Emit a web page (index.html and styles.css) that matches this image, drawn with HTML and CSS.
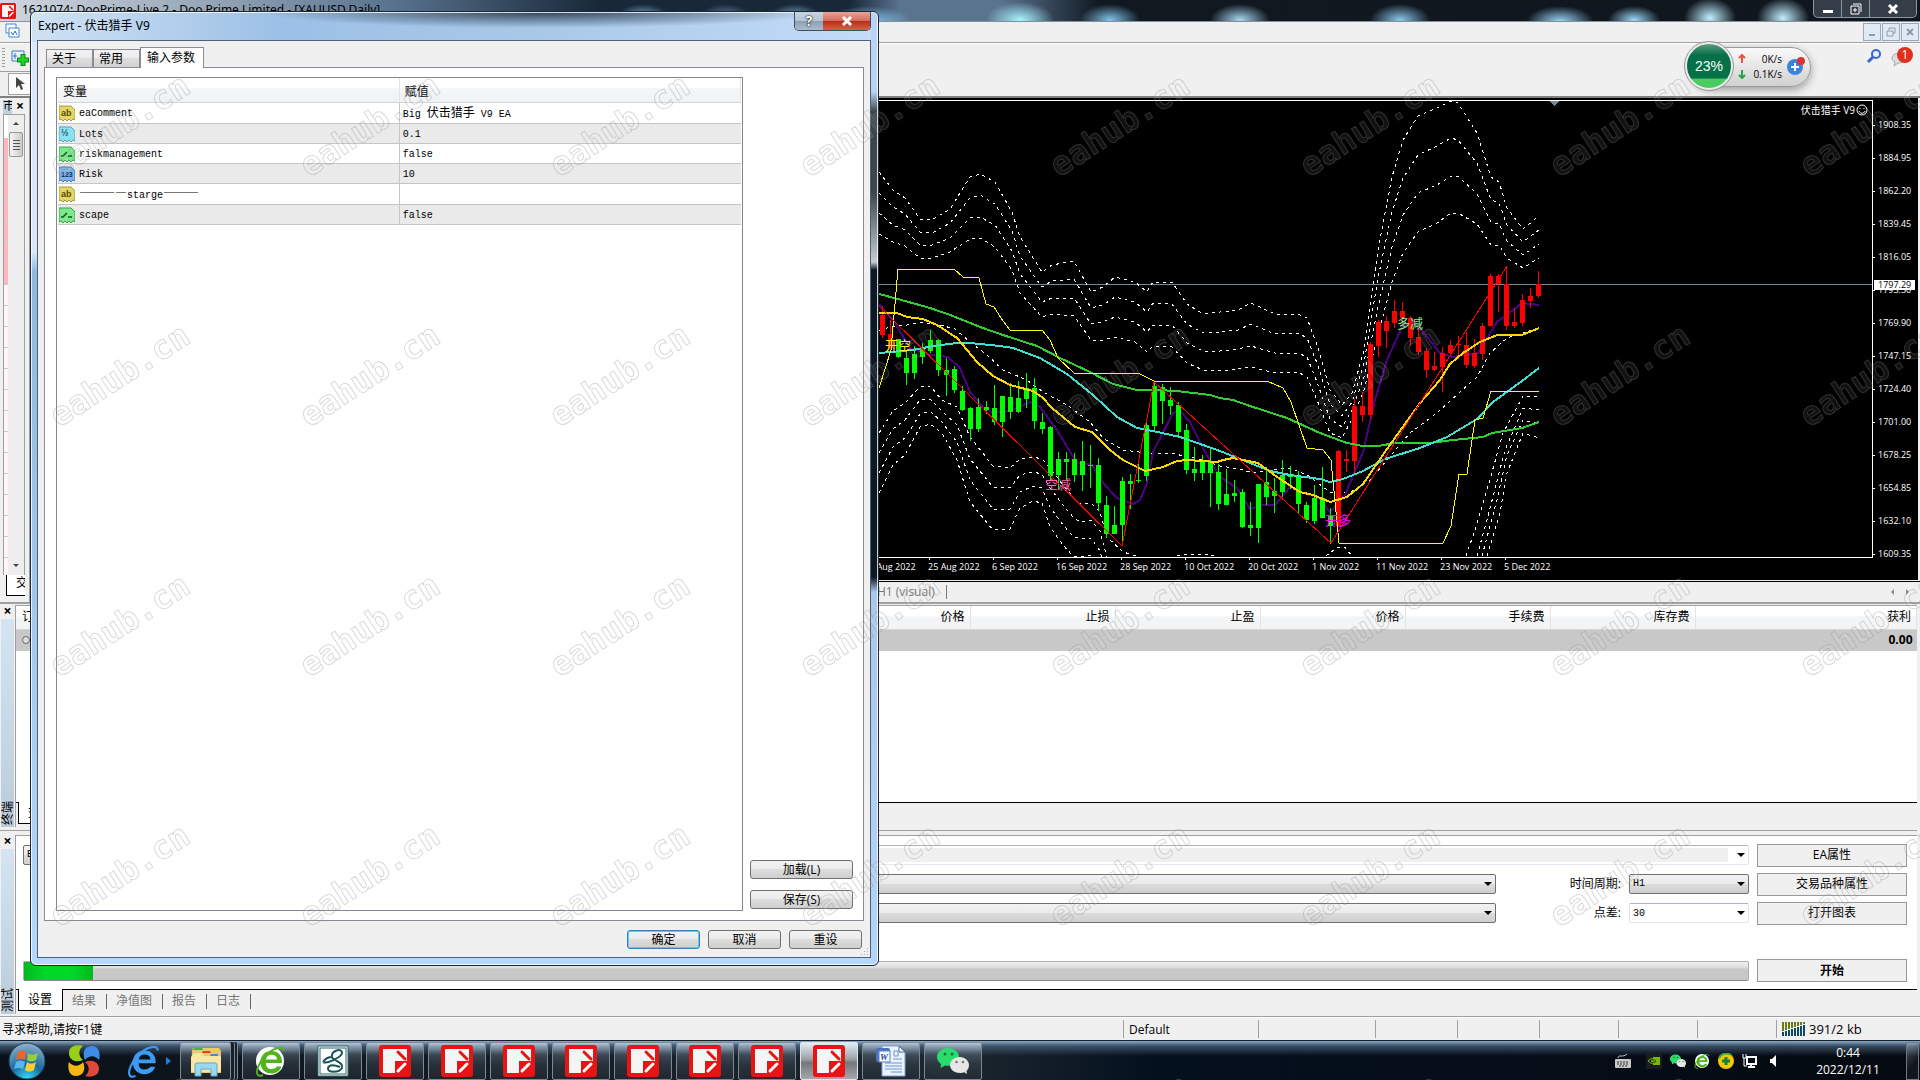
FILE: index.html
```html
<!DOCTYPE html>
<html lang="zh-CN">
<head>
  <meta charset="UTF-8" />
  <meta name="viewport" content="width=device-width, initial-scale=1.0"/>
  <title>DooPrime-Live 2 - XAUUSD</title>
  <link rel="stylesheet" href="styles.css">
</head>
<body>

  <!-- shared icons -->
  <svg class="defs">
    <symbol id="doo" viewBox="0 0 32 32">
      <rect width="32" height="32" rx="3" fill="#e81414"/>
      <path d="M4 4H28V16H16V28H4Z" fill="#f5f5f5"/>
      <path d="M19 7L26 14" stroke="#e81414" stroke-width="3" stroke-linecap="round"/>
      <path d="M19 26L26 19" stroke="#fff" stroke-width="3" stroke-linecap="round"/>
    </symbol>
    <symbol id="wechat" viewBox="0 0 32 28">
      <path d="M11 1C5 1 0 5 0 10C0 13 2 15.500 4 17L3.500 21L8 18.600C17 20 22 15 22 10C22 5 17 1 11 1Z" fill="#2bdc6c"/>
      <circle cx="8" cy="7" r="1.500" fill="#17733a"/><circle cx="15" cy="7" r="1.500" fill="#17733a"/>
      <path d="M23 10C17 10 13 14 13 18C13 23 18 26 23 26C25 26 26 25.600 27 25.300L30 27L29.500 24C31 22.500 32 20.500 32 18C32 14 28 10 23 10Z" fill="#e6e6e6"/>
      <circle cx="19.500" cy="15" r="1.300" fill="#777"/><circle cx="26" cy="15" r="1.300" fill="#777"/>
    </symbol>
    <symbol id="ie" viewBox="0 0 32 32">
      <path d="M27 18H11C11 22 13 24 16.500 24C19 24 21 23 22 21.500H26.500C25 26 21 28.500 16.500 28.500C10 28.500 5.500 24 5.500 17C5.500 10.500 10 6 16.500 6C23 6 27.500 10.500 27 18ZM11 14.500H22C22 11.500 20 9.800 16.500 9.800C13.500 9.800 11.500 11.500 11 14.500Z" fill="currentColor"/>
      <path d="M29 6C29 0 18 3 11 10C4 17 0 27 3 30C4 31 6 31 8 30" fill="none" stroke="currentColor" stroke-width="2"/>
    </symbol>
    <symbol id="file-ab" viewBox="0 0 16 16">
      <path d="M0 1H12L16 5V15L14 14L12 16L10 14L8 16L6 14L4 16L2 14L0 15Z" fill="#e4d76a" stroke="#a89838"/>
      <text x="2" y="11" class="icon-text" fill="#5a4a00">ab</text>
    </symbol>
    <symbol id="file-half" viewBox="0 0 16 16">
      <path d="M0 1H12L16 5V15L14 14L12 16L10 14L8 16L6 14L4 16L2 14L0 15Z" fill="#8fe0ee" stroke="#4aa9bd"/>
      <text x="2" y="10" class="icon-text" fill="#075a70">½</text>
    </symbol>
    <symbol id="file-bool" viewBox="0 0 16 16">
      <path d="M0 1H12L16 5V15L14 14L12 16L10 14L8 16L6 14L4 16L2 14L0 15Z" fill="#7ce88a" stroke="#35a548"/>
      <path d="M2 10H4L8 6M9 10H13" stroke="#0c5a1c" stroke-width="1.500" fill="none"/>
    </symbol>
    <symbol id="file-int" viewBox="0 0 16 16">
      <path d="M0 1H12L16 5V15L14 14L12 16L10 14L8 16L6 14L4 16L2 14L0 15Z" fill="#7fb2e6" stroke="#4a7db5"/>
      <text x="2" y="11" class="icon-text small" fill="#0a2f66">123</text>
    </symbol>
  </svg>

  <main class="app">
    <header class="titlebar">
      <svg class="app-icon" width="16" height="16"><use href="#doo"/></svg>
      <span class="app-title">1621074: DooPrime-Live 2 - Doo Prime Limited - [XAUUSD,Daily]</span>
      <div class="win-buttons">
        <button aria-label="minimize"><svg width="12" height="12"><rect x="1" y="7" width="10" height="3" fill="#fff"/></svg></button>
        <button aria-label="restore"><svg width="12" height="12"><path d="M3 1H11V9M1 3H9V11H1ZM4 6H6V8H4Z" fill="none" stroke="#fff" stroke-width="1"/></svg></button>
        <button class="wide" aria-label="close"><svg width="12" height="12"><path d="M2 2L10 10M10 2L2 10" stroke="#fff" stroke-width="3"/></svg></button>
      </div>
    </header>

    <div class="menubar">
      <svg width="16" height="16"><path d="M1 1H11V10H1Z" fill="#fff" stroke="#3a8ad8"/><path d="M4 5H14V14H4Z" fill="#fff" stroke="#3a8ad8"/><path d="M6 9L8 12L10 8L12 12" fill="none" stroke="#3a6ad0"/></svg>
      <div class="mdi-buttons">
        <button aria-label="minimize chart"><svg width="10" height="10"><path d="M2 8H8" stroke="#8c9cae" stroke-width="2"/></svg></button>
        <button aria-label="restore chart"><svg width="10" height="10"><path d="M3 3V1H9V6H7M1 4H7V9H1Z" fill="none" stroke="#8c9cae"/></svg></button>
        <button aria-label="close chart"><svg width="10" height="10"><path d="M2 2L8 8M8 2L2 8" stroke="#8c9cae" stroke-width="2"/></svg></button>
      </div>
    </div>

    <div class="toolbars">
      <div class="toolbar">
        <i class="grip"></i>
        <svg width="18" height="18"><path d="M1 2H13V12H1Z" fill="#e8f2ff" stroke="#3a78b8"/><path d="M4 4V10M2 7H6" stroke="#3a78b8"/><path d="M12 5V17M6 11H18" stroke="#0a8a14" stroke-width="5"/><path d="M12 6V16M7 11H17" stroke="#1ed428" stroke-width="3"/></svg>
        <div class="notify">
          <svg width="16" height="16"><circle cx="10" cy="5" r="4" fill="#e8f0ff" stroke="#3a66d0" stroke-width="2"/><path d="M7 8L2 13" stroke="#3a66d0" stroke-width="3"/></svg>
          <svg width="24" height="22"><path d="M2 12C2 6 16 5 16 12C16 16 10 17 8 17L4 20L5 16C3 15 2 14 2 12Z" fill="#ddd" stroke="#aaa"/><circle cx="15" cy="9" r="8" fill="#e0301c"/><text x="15" y="13" text-anchor="middle" class="badge-text">1</text></svg>
        </div>
      </div>
      <div class="toolbar second">
        <i class="grip"></i>
        <button class="tool-active" aria-label="cursor"><svg width="10" height="16"><path d="M1 1V12L4 9L6 14L8 13L6 8H10Z" fill="#444"/></svg></button>
      </div>
    </div>

    <section class="workspace">
      <aside class="market">
        <div class="market-head"><span>市</span><b>×</b></div>
        <div class="market-body">
          <i class="rows"></i>
          <div class="scrollbar"><i class="up"></i><i class="thumb"></i><i class="down"></i></div>
        </div>
        <div class="market-tab">交</div>
      </aside>
      <div class="chart-col">
        <div class="chart">
          <div class="plot">
            <svg id="plot"></svg>
            <span class="ea-name">伏击猎手 V9<svg width="12" height="12"><circle cx="6" cy="6" r="5" fill="none" stroke="#fff"/><path d="M4 4V5M8 4V5M3 7C4 10 8 10 9 7" fill="none" stroke="#fff"/></svg></span>
          </div>
          <div class="prices">
            <span>1908.35</span><span>1884.95</span><span>1862.20</span><span>1839.45</span><span>1816.05</span><span>1793.30</span><span>1769.90</span><span>1747.15</span><span>1724.40</span><span>1701.00</span><span>1678.25</span><span>1654.85</span><span>1632.10</span><span>1609.35</span>
            <b class="price-now">1797.29</b>
          </div>
          <div class="dates">
            <span>15 Aug 2022</span><span>25 Aug 2022</span><span>6 Sep 2022</span><span>16 Sep 2022</span><span>28 Sep 2022</span><span>10 Oct 2022</span><span>20 Oct 2022</span><span>1 Nov 2022</span><span>11 Nov 2022</span><span>23 Nov 2022</span><span>5 Dec 2022</span>
          </div>
        </div>
        <div class="chart-tabs"><a href="#">H1 (visual)</a><span class="arrows"><i class="left"></i><i class="right"></i></span></div>
      </div>
    </section>

    <section class="dock terminal">
      <div class="dock-side"><b>×</b><span>终端</span></div>
      <div class="dock-main">
        <table class="orders">
          <colgroup><col class="first"><col span="11" class="mid"><col></colgroup>
          <thead><tr><th class="start">订单</th><th></th><th></th><th></th><th></th><th></th><th>价格</th><th>止损</th><th>止盈</th><th>价格</th><th>手续费</th><th>库存费</th><th>获利</th></tr></thead>
          <tbody><tr><td class="start"><i class="dot"></i></td><td colspan="11"></td><td>0.00</td></tr></tbody>
        </table>
        <nav class="dock-tabs"><a href="#" class="active">交易</a></nav>
      </div>
    </section>

    <section class="dock tester">
      <div class="dock-side"><b>×</b><span>测试</span></div>
      <div class="dock-main">
        <form class="settings">
          <div class="combo"><select aria-label="type"><option>Expert Advisor</option></select></div>
          <div class="combo ea"><select aria-label="EA"><option></option></select></div>
          <button type="button">EA属性</button>
          <div class="combo symbol"><select aria-label="symbol"><option></option></select></div>
          <label for="period">时间周期:</label>
          <div class="combo"><select id="period"><option>H1</option></select></div>
          <button type="button">交易品种属性</button>
          <div class="combo symbol"><select aria-label="model"><option></option></select></div>
          <label for="spread">点差:</label>
          <div class="combo flat"><input id="spread" value="30"></div>
          <button type="button">打开图表</button>
          <div class="progress"><i style="width: 4%"></i></div>
          <button type="button" class="start-btn">开始</button>
        </form>
        <nav class="dock-tabs"><a href="#" class="active">设置</a><a href="#">结果</a><a href="#">净值图</a><a href="#">报告</a><a href="#">日志</a></nav>
      </div>
    </section>

    <footer class="status">
      <span class="help">寻求帮助,请按F1键</span><span class="profile">Default</span><span class="w117"></span><span class="w82"></span><span class="w82"></span><span class="w79"></span><span class="w79"></span><span class="w79"></span>
      <span class="conn"><svg width="24" height="14"><path d="M1 0V9M4 0V8M7 0V7M10 0V6M13 0V5M16 0V4M19 0V3M22 0V2" stroke="#6b7d12" stroke-width="2"/><path d="M1 10V14M4 9V14M7 8V14M10 7V14M13 6V14M16 5V14M19 4V14M22 3V14" stroke="#0c4a68" stroke-width="2"/></svg>391/2 kb</span>
    </footer>
  </main>

  <footer class="taskbar">
    <button class="start" aria-label="start">
      <svg width="38" height="38" viewBox="0 0 38 38">
        <defs><radialGradient id="orb" cx=".5" cy="1" r="1"><stop offset="0" stop-color="#35e0ff"/><stop offset=".45" stop-color="#176a9c"/><stop offset="1" stop-color="#8fb4cc"/></radialGradient></defs>
        <circle cx="19" cy="19" r="18" fill="url(#orb)" stroke="#1c3c54"/>
        <path d="M10 10Q14 7 18 10L17 18Q13 15 8 18Z" fill="#f0642c"/>
        <path d="M20 11Q24 14 30 11L28 18Q23 21 19 18Z" fill="#9ccc3c"/>
        <path d="M8 20Q12 17 17 20L15 27Q11 25 6 27Z" fill="#5ab4f0"/>
        <path d="M19 20Q23 23 28 20L26 28Q21 31 17 28Z" fill="#fccc34"/>
      </svg>
    </button>
    <button class="pin" aria-label="launcher"><svg width="32" height="32" viewBox="0 0 32 32"><path d="M1 8C1 -1 13 0 15 1C10 5 10 11 15 15C9 18 1 16 1 8Z" fill="#98d018"/><path d="M24 1C33 1 32 13 31 15C27 10 21 10 17 15C14 9 16 1 24 1Z" fill="#3c8ce8"/><path d="M8 31C-1 31 0 19 1 17C5 22 11 22 15 17C18 23 16 31 8 31Z" fill="#f4b814"/><path d="M31 24C31 33 19 32 17 31C22 27 22 21 17 17C23 14 31 16 31 24Z" fill="#e0483c"/></svg></button>
    <button class="pin ie" aria-label="browser"><svg width="34" height="36"><use href="#ie"/></svg><i></i></button>
    <button class="task explorer" aria-label="explorer"><svg width="32" height="32" viewBox="0 0 32 32"><path d="M2 6L3 3H29L31 6V28H1Z" fill="#e9c96a"/><path d="M4 3H12L13 5H3Z" fill="#3bb54a"/><path d="M13 6H20L21 8H12Z" fill="#d8432e"/><path d="M21 9H28V11H20Z" fill="#3a8ae0"/><path d="M1 12L4 8H12L14 11H31V27H1Z" fill="#f8e7a4"/><path d="M5 31V20Q5 18 7 18H25Q27 18 27 20V31H21V24H11V31Z" fill="#9cd8f0" stroke="#5aa8d0"/></svg></button>
    <button class="task" aria-label="360"><svg width="32" height="32" class="green-ie"><circle cx="15" cy="16" r="14" fill="#fff"/><use href="#ie"/></svg></button>
    <button class="task" aria-label="script"><svg width="32" height="32"><rect x="1" y="1" width="30" height="30" fill="#fff" stroke="#2b6668"/><rect x="3" y="3" width="26" height="26" fill="none" stroke="#2b6668"/><path d="M6 17C10 19 26 12 25 7C23 3 14 6 15 12C16 16 27 17 25 23C22 28 10 28 11 23C12 19 18 20 23 22M6 17C8 14 12 12 15 12" fill="none" stroke="#1d5557" stroke-width="2"/></svg></button>
    <button class="task" aria-label="terminal 1"><svg width="32" height="32"><use href="#doo"/></svg></button>
    <button class="task" aria-label="terminal 2"><svg width="32" height="32"><use href="#doo"/></svg></button>
    <button class="task" aria-label="terminal 3"><svg width="32" height="32"><use href="#doo"/></svg></button>
    <button class="task" aria-label="terminal 4"><svg width="32" height="32"><use href="#doo"/></svg></button>
    <button class="task" aria-label="terminal 5"><svg width="32" height="32"><use href="#doo"/></svg></button>
    <button class="task" aria-label="terminal 6"><svg width="32" height="32"><use href="#doo"/></svg></button>
    <button class="task" aria-label="terminal 7"><svg width="32" height="32"><use href="#doo"/></svg></button>
    <button class="task current" aria-label="terminal 8"><svg width="32" height="32"><use href="#doo"/></svg></button>
    <button class="task" aria-label="word"><svg width="32" height="32"><path d="M7 1H24L30 7V31H7Z" fill="#eaf3ff" stroke="#7d9fd4"/><path d="M24 1V7H30Z" fill="#fff" stroke="#45659c"/><path d="M19 6H23V11H19ZM18 14H27M10 18H27M10 21H27M10 24H27M16 27H27" fill="none" stroke="#6a94d4"/><rect x="1" y="3" width="14" height="14" rx="2" fill="#4a74c0"/><rect x="4" y="6" width="11" height="11" fill="#f4f8ff" stroke="#5a80c4"/><text x="5" y="15" class="word-w">W</text></svg></button>
    <button class="task" aria-label="wechat"><svg width="34" height="28"><use href="#wechat"/></svg></button>

    <div class="tray">
      <svg width="16" height="16"><rect x="0" y="6" width="16" height="9" rx="1" fill="#c8c8c8"/><path d="M2 9H14M2 11H14M4 13H12" stroke="#333" stroke-dasharray="2 1"/><path d="M3 5C3 1 8 5 12 1" fill="none" stroke="#c8c8c8"/></svg>
      <svg width="16" height="16"><rect width="16" height="16" fill="#1c1c1c"/><path d="M7 4H14V12H7Z" fill="#76b900"/><path d="M2 8Q6 3 11 8Q7 13 2 8ZM5 8Q7 6 9 8Q7 10 5 8" fill="#1c1c1c" stroke="#76b900"/></svg>
      <svg width="16" height="14"><use href="#wechat"/></svg>
      <svg width="16" height="16" class="green-ie"><circle cx="8" cy="8" r="7" fill="#fff"/><use href="#ie"/></svg>
      <svg width="16" height="16"><circle cx="8" cy="8" r="8" fill="#f6c800"/><path d="M1 5A8 8 0 0 1 13 2" fill="none" stroke="#3aa648" stroke-width="2"/><path d="M8 4V12M4 8H12" stroke="#15803a" stroke-width="3"/></svg>
      <svg width="16" height="16"><path d="M5 4H14V11H5ZM9 11V14M6 14H13" fill="none" stroke="#fff" stroke-width="2"/><path d="M1 1V5H4V1M2 5V13H5" fill="none" stroke="#fff"/></svg>
      <svg width="16" height="16"><path d="M4 6H6L10 2V14L6 10H4Z" fill="#fff"/></svg>
    </div>
    <div class="clock"><span>0:44</span><span>2022/12/11</span></div>
    <button class="show-desktop" aria-label="show desktop"></button>
  </footer>

  <div class="netspeed">
    <div class="ball">23%</div>
    <div class="rates">
      <span><svg width="8" height="10"><path d="M4 1V9M1 4L4 1L7 4" fill="none" stroke="#e8553c" stroke-width="2"/></svg>0K/s</span>
      <span><svg width="8" height="10"><path d="M4 1V9M1 6L4 9L7 6" fill="none" stroke="#28a04c" stroke-width="2"/></svg>0.1K/s</span>
    </div>
    <svg width="20" height="20"><circle cx="9" cy="11" r="8" fill="#3a84dc"/><path d="M9 7V15M5 11H13" stroke="#fff" stroke-width="2"/><circle cx="15" cy="5" r="4" fill="#dc3434"/></svg>
  </div>

  <section class="dialog">
    <header>
      <span>Expert - 伏击猎手 V9</span>
      <div class="dialog-buttons"><button aria-label="help">?</button><button class="close" aria-label="close"><svg width="12" height="10"><path d="M2 1L10 9M10 1L2 9" stroke="#fff" stroke-width="3"/></svg></button></div>
    </header>
    <div class="client">
      <nav class="tabs"><button>关于</button><button>常用</button><button class="active">输入参数</button></nav>
      <div class="page">
        <div class="inputs-box">
          <table class="inputs">
            <thead><tr><th>变量</th><th>赋值</th></tr></thead>
            <tbody>
              <tr><td><svg width="16" height="16"><use href="#file-ab"/></svg>eaComment</td><td>Big <span class="cjk">伏击猎手</span> V9 EA</td></tr>
              <tr><td><svg width="16" height="16"><use href="#file-half"/></svg>Lots</td><td>0.1</td></tr>
              <tr><td><svg width="16" height="16"><use href="#file-bool"/></svg>riskmanagement</td><td>false</td></tr>
              <tr><td><svg width="16" height="16"><use href="#file-int"/></svg>Risk</td><td>10</td></tr>
              <tr><td><svg width="16" height="16"><use href="#file-ab"/></svg><span class="cjk">————</span>starge<span class="cjk">———</span></td><td></td></tr>
              <tr><td><svg width="16" height="16"><use href="#file-bool"/></svg>scape</td><td>false</td></tr>
            </tbody>
          </table>
        </div>
        <div class="side-buttons"><button>加载(L)</button><button>保存(S)</button></div>
      </div>
      <div class="actions"><button class="default">确定</button><button>取消</button><button>重设</button></div>
      <i class="resize"></i>
    </div>
  </section>

  <svg class="watermark" width="100%" height="100%">
    <defs>
      <pattern id="mark" width="250" height="250" patternUnits="userSpaceOnUse">
        <text transform="translate(59 178) rotate(-33)">eahub.cn</text>
      </pattern>
    </defs>
    <rect width="100%" height="100%" fill="url(#mark)"/>
  </svg>

  <script src="chart.js"></script>
</body>
</html>
```
FILE: styles.css
```css
* {
  box-sizing: border-box;
}

body {
  margin: 0;
  min-height: 100vh;
  display: flex;
  flex-direction: column;
  position: relative;
  overflow: hidden;
  background: #f0f0f0;
  color: #000;
  font: 12px/16px "Open Sans", "Noto Sans CJK SC", sans-serif;
}

button, input, select {
  font: inherit;
  color: inherit;
  padding: 0;
}

a {
  color: inherit;
  text-decoration: none;
}

svg {
  display: block;
  flex: none;
}

.defs {
  display: none;
}

.icon-text {
  font: bold 9px "Liberation Sans", sans-serif;
}

.icon-text.small {
  font-size: 7px;
}

.app {
  flex: 1;
  display: flex;
  flex-direction: column;
}

/* title bar */
.titlebar {
  height: 22px;
  display: flex;
  align-items: flex-start;
  border-bottom: 1px solid #888f98;
  background:
    radial-gradient(ellipse 28px 16px at 643px 20px, #8cc8f0, transparent),
    radial-gradient(ellipse 28px 16px at 725px 20px, #7a8fc0, transparent),
    radial-gradient(ellipse 28px 16px at 795px 20px, #8cc8f0, transparent),
    radial-gradient(ellipse 44px 16px at 868px 22px, #8cd0ff, transparent),
    radial-gradient(ellipse 34px 18px at 1020px 20px, #a8f4ff, transparent),
    radial-gradient(ellipse 30px 16px at 1110px 20px, #7fc4ea, transparent),
    radial-gradient(ellipse 30px 16px at 1240px 20px, #a8d8f4, transparent),
    radial-gradient(ellipse 30px 16px at 1400px 20px, #8cc8f0, transparent),
    radial-gradient(ellipse 34px 16px at 1560px 22px, #a0dcff, transparent),
    radial-gradient(ellipse 26px 14px at 1634px 20px, #9cd8f8, transparent),
    radial-gradient(ellipse 26px 20px at 1710px 18px, #c0f0ff, transparent),
    radial-gradient(ellipse 26px 20px at 1783px 18px, #c0f0ff, transparent),
    linear-gradient(90deg, #d0d8e0, #98a8b8 200px, #56708c 400px, #182838 600px, #182838 850px, #5a7490 900px, #5a7490 1000px, #101820 1100px, #10161e);
}

.app-icon {
  margin-top: 3px;
}

.app-title {
  flex: 1;
  padding: 2px 0 0 6px;
  font-family: "Noto Sans", sans-serif;
}

.win-buttons {
  display: flex;
  height: 18px;
  margin-right: 3px;
  border: 1px solid #8c98a4;
  border-top: 0;
  border-radius: 0 0 5px 5px;
  background: rgba(200, 220, 240, 0.2);
}

.win-buttons button {
  width: 28px;
  border: 0;
  border-right: 1px solid #8c98a4;
  background: none;
  display: flex;
  align-items: center;
  justify-content: center;
}

.win-buttons .wide {
  width: 46px;
  border-right: 0;
}

.menubar {
  height: 21px;
  padding: 1px 1px 0 5px;
  border-bottom: 1px solid #a0a0a0;
  display: flex;
  justify-content: space-between;
}

.mdi-buttons {
  display: flex;
  gap: 1px;
}

.mdi-buttons button {
  width: 18px;
  height: 18px;
  border: 1px solid #98a8b8;
  background: #dfeaf5;
  display: flex;
  align-items: center;
  justify-content: center;
}

.toolbars {
  height: 55px;
  border-top: 1px solid #fff;
  border-bottom: 2px solid #808080;
}

.toolbar {
  height: 27px;
  padding-left: 2px;
  display: flex;
  align-items: center;
  gap: 6px;
}

.toolbar.second {
  height: 25px;
  width: 30px;
  border-top: 1px solid #a0a0a0;
  overflow: hidden;
}

.grip {
  width: 3px;
  height: 20px;
  background: repeating-linear-gradient(#a0a0a0 0 1px, transparent 1px 3px);
}

.tool-active {
  flex: none;
  width: 24px;
  height: 22px;
  padding-left: 6px;
  border: 1px solid #a0a0a0;
  background: #fafafa;
}

.notify {
  margin-left: auto;
  display: flex;
  align-items: center;
  gap: 8px;
  padding: 0 6px 2px 0;
}

.badge-text {
  font-size: 12px;
  fill: #fff;
}

/* market watch and chart */
.workspace {
  display: flex;
  height: 506px;
  border-bottom: 2px solid #a0a0a0;
}

.market {
  width: 30px;
  flex: none;
  padding: 2px 4px 6px 3px;
  display: flex;
  flex-direction: column;
  border-right: 1px solid #a0a0a0;
  overflow: hidden;
}

.market-head {
  height: 14px;
  display: flex;
  gap: 4px;
  line-height: 12px;
}

.market-head span {
  width: 9px;
  overflow: hidden;
  background: #bfd0e0;
}

.market-head b, .dock-side b {
  font-size: 14px;
}

.market-body {
  flex: 1;
  display: flex;
  border: 1px solid #a0a0a0;
  border-bottom: 0;
  background: #fff;
}

.market-body .rows {
  width: 4px;
  margin-top: 23px;
  background:
    repeating-linear-gradient(transparent 0 20px, #ccc 20px 21px),
    linear-gradient(#ffb6c1 147px, #fff5f5 147px);
}

.scrollbar {
  width: 16px;
  background: #eee;
  display: flex;
  flex-direction: column;
  align-items: center;
}

.scrollbar .up, .scrollbar .down {
  border: 3px solid transparent;
}

.scrollbar .up {
  border-bottom-color: #444;
  margin: 4px 0 7px;
}

.scrollbar .thumb {
  width: 14px;
  height: 25px;
  border: 1px solid #999;
  border-radius: 2px;
  background: repeating-linear-gradient(#555 0 1px, transparent 1px 3px) center / 7px 10px no-repeat, linear-gradient(90deg, #f5f5f5, #ccc);
}

.scrollbar .down {
  border-top-color: #444;
  margin-top: auto;
  margin-bottom: 5px;
}

.market-tab {
  height: 21px;
  margin-left: 3px;
  padding-left: 9px;
  border: solid #000;
  border-width: 0 0 1px 1px;
  background: #fff;
  overflow: hidden;
}

.chart-col {
  flex: 1;
  min-width: 0;
}

.chart {
  height: 482px;
  padding-top: 2px;
  margin-right: 2px;
  background: #000;
  color: #fff;
  display: grid;
  grid-template-columns: 1fr 45px;
  grid-template-rows: 458px 1fr;
  font-size: 9px;
}

.plot {
  position: relative;
  min-width: 0;
  border: solid #fff;
  border-width: 1px 1px 1px 0;
  overflow: hidden;
}

#plot {
  width: 100%;
  height: 456px;
  shape-rendering: crispEdges;
}

.ea-name {
  position: absolute;
  top: 1px;
  right: 4px;
  display: flex;
  align-items: center;
  gap: 1px;
  font-size: 10px;
}

.prices {
  position: relative;
  padding-top: 17px;
  display: flex;
  flex-direction: column;
}

.prices span {
  flex: none;
  height: 33px;
  display: flex;
  gap: 3px;
}

.prices span:nth-of-type(14) {
  height: 16px;
}

.prices span::before {
  content: "";
  width: 2px;
  height: 1px;
  margin-top: 8px;
  background: #fff;
}

.price-now {
  position: absolute;
  top: 180px;
  left: 1px;
  width: 41px;
  height: 10px;
  padding-left: 4px;
  font-weight: normal;
  line-height: 10px;
  background: #fff;
  color: #000;
}

.dates {
  grid-column: 1 / 3;
  display: flex;
  padding-left: 834px;
  line-height: 14px;
}

.dates span {
  width: 64px;
  flex: none;
  white-space: nowrap;
}

.dates span::before {
  content: "";
  display: block;
  width: 1px;
  height: 2px;
  margin-left: 1px;
  background: #fff;
}

.chart-tabs {
  height: 20px;
  margin-top: 1px;
  padding: 0 8px 0 847px;
  border-top: 1px solid #000;
  display: flex;
  align-items: center;
  justify-content: space-between;
  color: #777;
}

.chart-tabs a {
  width: 70px;
  line-height: 14px;
  border-right: 1px solid #777;
}

.arrows {
  display: flex;
  gap: 12px;
}

.arrows i {
  border: 3px solid transparent;
}

.arrows .left {
  border-right-color: #888;
}

.arrows .right {
  border-left-color: #888;
}

/* docked panels */
.dock {
  display: flex;
  margin-right: 3px;
}

.dock-side {
  width: 15px;
  flex: none;
  padding: 0 1px;
  display: flex;
  flex-direction: column;
}

.dock-side b {
  height: 14px;
  line-height: 11px;
  text-align: center;
}

.dock-side span {
  flex: 1;
  writing-mode: vertical-rl;
  transform: rotate(180deg);
  text-orientation: sideways;
  line-height: 13px;
  padding-top: 2px;
  background: linear-gradient(#bccbda, #d6e4f2);
}

.dock-main {
  flex: 1;
  min-width: 0;
  display: flex;
  flex-direction: column;
  border: solid #a0a0a0;
  border-width: 1px 0 0 1px;
  background: #fff;
}

.terminal {
  flex: 1;
  padding-bottom: 3px;
  margin-top: 1px;
}

.orders {
  width: 100%;
  table-layout: fixed;
  border-collapse: collapse;
}

.orders .first {
  width: 84px;
}

.orders .mid {
  width: 145px;
}

.orders th {
  height: 23px;
  padding: 0 5px 0 0;
  font-weight: normal;
  text-align: right;
  border-right: 1px solid #e2e4e6;
  border-bottom: 1px solid #d5d5d5;
  background: linear-gradient(#fff 45%, #f3f4f6 46%, #f3f4f6);
}

.orders td {
  height: 22px;
  padding: 0 4px 0 0;
  font-weight: bold;
  text-align: right;
  background: #c8c8c8;
}

.orders .start {
  text-align: left;
  padding-left: 6px;
}

.dot {
  display: block;
  width: 8px;
  height: 8px;
  border: 1px solid #666;
  border-radius: 50%;
  background: #ddd;
}

.dock-tabs {
  margin-top: auto;
  height: 25px;
  padding-left: 2px;
  border-top: 1px solid #000;
  background: #f0f0f0;
  color: #777;
  display: flex;
}

.dock-tabs a {
  height: 15px;
  margin-top: 4px;
  padding: 0 10px 0 9px;
  line-height: 14px;
  border-right: 1px solid #666;
}

.dock-tabs .active {
  height: 22px;
  margin-top: -1px;
  padding-top: 4px;
  border: solid #000;
  border-width: 0 1px 1px 1px;
  background: #fff;
  color: #000;
}

.tester {
  border-top: 1px solid #a0a0a0;
  padding: 4px 0 2px;
}

.settings {
  display: grid;
  grid-template-columns: 100px 1fr 117px 120px 150px;
  grid-template-rows: 24px 24px 24px 24px;
  row-gap: 5px;
  column-gap: 8px;
  align-items: center;
  padding: 7px 10px 7px 7px;
}

.settings label {
  text-align: right;
}

.settings button {
  height: 23px;
  border: 1px solid #999;
  background: #f0f0f0;
}

.combo {
  position: relative;
  height: 20px;
}

.combo::after {
  content: "";
  position: absolute;
  right: 4px;
  top: 8px;
  border: 4px solid transparent;
  border-top-color: #000;
  border-bottom: 0;
}

.combo select, .combo input {
  width: 100%;
  height: 20px;
  padding: 0 3px;
  appearance: none;
  border: 1px solid #707070;
  border-radius: 2px;
  background: linear-gradient(#f2f2f2, #ebebeb 48%, #dcdcdc 50%, #cfcfcf);
  font: 10px/16px "Liberation Mono", monospace;
}

.combo.flat input, .combo.ea select {
  border-color: #b0b3ba #dfe3ea #e3e9ef #dfe3ea;
  background: #fff;
}

.combo.ea {
  grid-column: 2 / 5;
}

.combo.ea select {
  background: linear-gradient(#f0f0f0, #f0f0f0) 2px 2px / calc(100% - 22px) 14px no-repeat #fff;
}

.combo.symbol {
  grid-column: 2;
}

.progress {
  grid-column: 1 / 5;
  grid-row: 5;
  height: 20px;
  border: 1px solid #b0b0b0;
  border-bottom-color: #888;
  border-radius: 2px;
  background: linear-gradient(#f0f0f0, #dedede 30%, #c8c8c8 40%, #c8c8c8);
}

.progress i {
  display: block;
  height: 100%;
  background: linear-gradient(90deg, #00b820, #00d828 30%, #00d828 70%, #00b820);
}

.settings .start-btn {
  grid-row: 5;
  font-weight: bold;
}

.status {
  height: 24px;
  padding: 3px 0 2px;
  border-top: 1px solid #a0a0a0;
  box-shadow: inset 0 1px #fff;
  display: flex;
  line-height: 19px;
}

.status span {
  border-right: 1px solid #a0a0a0;
}

.status .help {
  flex: 1;
  padding-left: 2px;
}

.status .profile {
  width: 135px;
  padding-left: 5px;
}

.w117 { width: 117px; }
.w82 { width: 82px; }
.w79 { width: 79px; }

.status .conn {
  width: 143px;
  padding-left: 5px;
  border: 0;
  display: flex;
  align-items: center;
  gap: 3px;
  font-size: 13px;
}

/* taskbar */
.taskbar {
  height: 40px;
  padding-left: 8px;
  display: flex;
  align-items: center;
  border-top: 1px solid #14202c;
  background: linear-gradient(#8ba9c8, rgba(90, 120, 150, 0.6) 5px, transparent 15px), linear-gradient(90deg, #0a1018, #1c262e 50%, #05101f 60%, #050a10);
}

.taskbar button {
  border: 0;
  background: none;
  display: flex;
  align-items: center;
  justify-content: center;
}

.taskbar .start {
  width: 38px;
}

.taskbar .pin {
  width: 60px;
  margin-left: 8px;
}

.taskbar .ie {
  width: 58px;
  margin-left: 6px;
  margin-right: 2px;
  color: #3c9cf4;
  gap: 5px;
}

.ie i {
  border: 4px solid transparent;
  border-left: 5px solid #1e7cf0;
  border-right: 0;
}

.taskbar .task {
  width: 58px;
  height: 38px;
  margin-right: 4px;
  border: 1px solid #7c8894;
  border-radius: 2px;
  background: linear-gradient(rgba(210, 225, 240, 0.7), rgba(120, 140, 160, 0.4) 30%, rgba(60, 70, 80, 0.5) 60%, rgba(40, 48, 56, 0.5));
}

.taskbar .explorer {
  width: 51px;
  margin-right: 11px;
  box-shadow: 3px 0 #16202a, 4px 0 #7c8894, 6px 0 #16202a, 7px 0 #7c8894;
}

.taskbar .current {
  border-color: #e0e4e8;
  background: linear-gradient(#e4ecf4, #9aa0a6 45%, #74787c 55%, #a4a8ac);
}

.green-ie {
  color: #52b41c;
}

.word-w {
  font: italic bold 9px "Liberation Serif", serif;
  fill: #2a4c94;
}

.tray {
  margin-left: auto;
  padding-right: 8px;
  display: flex;
  align-items: center;
  gap: 8px;
}

.tray svg:first-child {
  margin-right: 7px;
}

.clock {
  width: 116px;
  display: flex;
  flex-direction: column;
  align-items: center;
  color: #fff;
  line-height: 17px;
}

.taskbar .show-desktop {
  width: 13px;
  height: 38px;
  margin-right: 1px;
  border: 1px solid #6c7884;
  background: linear-gradient(135deg, rgba(255, 255, 255, 0.3), rgba(255, 255, 255, 0.05) 60%);
}

/* floating network meter */
.netspeed {
  position: absolute;
  right: 109px;
  top: 47px;
  width: 120px;
  height: 40px;
  padding: 0 4px 2px 46px;
  border: 1px solid #999;
  border-radius: 20px;
  background: linear-gradient(#fafafa, #d0d0d0);
  box-shadow: 0 3px 8px rgba(0, 0, 0, 0.35);
  display: flex;
  align-items: center;
  justify-content: flex-end;
  gap: 4px;
  font-size: 10px;
}

.ball {
  position: absolute;
  left: -7px;
  top: -6px;
  width: 48px;
  height: 48px;
  border: 2px solid #ececec;
  border-radius: 50%;
  outline: 1px solid #999;
  background: linear-gradient(#5c9c80, #067048 25%, #067048 78%, #4ccc60 79%);
  color: #fff;
  font: 14px/44px "Liberation Sans", sans-serif;
  text-align: center;
}

.rates {
  width: 46px;
}

.rates span {
  height: 15px;
  display: flex;
  align-items: center;
  justify-content: space-between;
}

/* expert dialog */
.dialog {
  position: absolute;
  left: 30px;
  top: 11px;
  width: 849px;
  height: 955px;
  padding: 0 7px 7px 6px;
  display: flex;
  flex-direction: column;
  border: 1px solid #1c2834;
  border-radius: 6px;
  box-shadow: inset 0 0 0 1px rgba(255, 255, 255, 0.8);
  background:
    linear-gradient(#b8d4f2 80px, #3c444c 100px, #3c444c 180px, #c8ccd0 250px, #0c1824 258px, #0c1824 565px, #aac8e8 580px, #b4d4f8) right / 7px 100% no-repeat,
    radial-gradient(ellipse 280px 16px at 510px 0, rgba(20, 36, 54, 0.8), transparent) top / 100% 30px no-repeat,
    linear-gradient(90deg, #d0e2f4, #9cc0e6 250px, #a8c8e8 500px, #c4dcf8) top / 100% 30px no-repeat,
    linear-gradient(#d8e8f8 240px, #90b8e0 260px, #b4d8ff);
}

.dialog header {
  height: 28px;
  padding: 6px 0 0 1px;
  display: flex;
  justify-content: space-between;
  font-family: "Noto Sans", "Noto Sans CJK SC", sans-serif;
}

.dialog-buttons {
  display: flex;
  height: 19px;
  margin-top: -6px;
  border: 1px solid #3c5064;
  border-top: 0;
  border-radius: 0 0 5px 5px;
  overflow: hidden;
}

.dialog-buttons button {
  width: 28px;
  border: 0;
  background: linear-gradient(#c8d4e0, #b4c4d4 48%, #8ca0b4 50%, #a8bccc);
  color: #fff;
  font: bold 14px/18px "Open Sans", sans-serif;
  text-shadow: 0 0 2px #000, 0 0 1px #000;
}

.dialog-buttons .close {
  width: 47px;
  display: flex;
  align-items: center;
  justify-content: center;
  background: linear-gradient(#e8a498, #d46c5c 48%, #b82c14 50%, #d86048);
}

.client {
  position: relative;
  flex: 1;
  padding: 6px 6px 0;
  display: flex;
  flex-direction: column;
  border: 1px solid #4c6078;
  background: #f0f0f0;
}

.tabs {
  display: flex;
  align-items: flex-end;
  padding-left: 2px;
  height: 20px;
}

.tabs button {
  width: 47px;
  height: 18px;
  padding-left: 5px;
  text-align: left;
  border: 1px solid #898c95;
  border-bottom: 0;
  background: linear-gradient(#f2f2f2, #ebebeb 48%, #dddddd 50%, #d2d2d2);
  line-height: 16px;
}

.tabs .active {
  width: 64px;
  height: 21px;
  padding-left: 6px;
  margin-bottom: -1px;
  background: #fff;
  z-index: 1;
}

.page {
  height: 854px;
  padding: 9px 10px 9px 11px;
  display: flex;
  gap: 7px;
  border: 1px solid #898c95;
  background: #fff;
}

.inputs-box {
  flex: 1;
  padding: 0 1px;
  border: 1px solid #828790;
}

.inputs {
  width: 100%;
  table-layout: fixed;
  border-collapse: collapse;
  font: 10px/17px "Liberation Mono", monospace;
}

.inputs th {
  height: 24px;
  padding: 2px 0 0 5px;
  text-align: left;
  font: 12px/16px "Noto Sans CJK SC", sans-serif;
  border-right: 1px solid #e2e4e6;
  border-bottom: 1px solid #d5d5d5;
  background: linear-gradient(#fff 42%, #f5f6f8 43%, #f0f1f3);
}

.inputs td {
  height: 20px;
  padding: 2px 0 0 3px;
  border-bottom: 1px solid #c6c6c6;
}

.inputs td:first-child {
  padding-left: 1px;
  border-right: 1px solid #c6c6c6;
}

.inputs tbody tr:nth-child(even) {
  background: #eaeaea;
}

.inputs svg {
  float: left;
  margin-right: 4px;
}

.cjk {
  font: 12px/14px "Noto Sans CJK SC", sans-serif;
}

.side-buttons {
  width: 103px;
  display: flex;
  flex-direction: column;
  justify-content: flex-end;
  gap: 11px;
  padding-bottom: 2px;
}

.side-buttons button, .actions button {
  height: 19px;
  border: 1px solid #707070;
  border-radius: 3px;
  background: linear-gradient(#f2f2f2, #ebebeb 48%, #dddddd 50%, #cfcfcf);
  line-height: 16px;
}

.actions {
  display: flex;
  justify-content: flex-end;
  gap: 8px;
  padding: 9px 2px 0 0;
}

.actions button {
  width: 73px;
}

.actions .default {
  border-color: #3c7fb1;
  box-shadow: inset 0 0 0 1px #4cd0f4;
}

.resize {
  position: absolute;
  right: 2px;
  bottom: 2px;
  width: 8px;
  height: 8px;
  background: radial-gradient(#aaa 1px, transparent 1px) 0 0 / 3px 3px;
  clip-path: polygon(100% 0, 100% 100%, 0 100%);
}

.watermark {
  position: absolute;
  left: 0;
  top: 0;
  pointer-events: none;
}

.watermark text {
  font: bold 33px "DejaVu Sans Mono", monospace;
  fill: rgba(255, 255, 255, 0.07);
  stroke: rgba(128, 128, 128, 0.3);
}
```
FILE: chart.js
```js
const NS = "http://www.w3.org/2000/svg";
const plot = document.getElementById("plot");

// [high, top of body, bottom of body, low], one candle every 8px
const candles = [
  [306,315,335,338],[320,334,348,352],[339,339,357,358],[352,358,373,385],[346,354,373,379],[343,349,357,364],
  [330,340,351,353],[339,340,370,376],[358,370,375,396],[366,369,390,393],[386,391,410,411],[407,408,429,441],
  [398,407,429,432],[401,407,410,414],[385,408,422,425],[396,396,422,437],[383,397,412,419],[381,398,412,413],
  [373,388,399,408],[378,388,421,429],[413,422,429,434],[426,427,476,481],[452,459,475,490],[452,459,462,480],
  [453,459,475,482],[441,461,475,491],[445,465,466,488],[458,465,503,511],[496,505,534,538],[506,525,534,534],
  [477,481,525,546],[474,481,484,509],[459,480,481,483],[422,425,476,481],[382,386,426,431],[384,387,401,424],
  [387,400,406,415],[402,405,432,437],[424,430,470,474],[447,469,473,481],[455,462,473,480],[448,461,473,507],
  [464,472,504,510],[469,494,505,505],[480,493,496,502],[489,492,527,528],[502,525,528,536],[484,484,528,543],
  [467,482,497,505],[478,491,496,513],[460,475,492,497],[466,475,477,489],[471,477,504,514],[502,505,520,523],
  [485,498,521,524],[467,498,518,518],[508,516,526,544],[450,451,526,527],[450,459,461,472],[399,406,461,475],
  [392,406,415,422],[342,344,415,419],[320,322,346,357],[316,321,331,348],[300,311,323,328],[302,311,318,325],
  [316,318,338,346],[328,337,352,355],[348,351,370,378],[352,366,370,371],[347,353,367,392],[340,345,353,354],
  [336,344,345,359],[332,345,365,368],[339,353,366,368],[323,326,354,360],[274,276,326,326],[274,276,284,312],
  [266,284,326,330],[308,322,326,328],[294,300,323,326],[288,296,301,308],[271,284,296,298]
];

// [x, outer band, inner band]; two more bands run between them
const upper = [
  [879,172,234],[893,190,242],[905,198,246],[920,219,258],[932,220,258],[950,209,252],[970,177,239],[980,174,238],
  [995,182,247],[1012,212,270],[1020,237,293],[1042,272,317],[1052,265,314],[1074,261,316],[1091,292,340],
  [1103,287,340],[1115,277,337],[1135,282,342],[1147,292,352],[1153,282,346],[1172,282,347],[1187,304,363],
  [1203,314,370],[1220,312,371],[1238,310,369],[1251,303,367],[1275,314,373],[1298,314,372],[1307,318,377],
  [1317,345,400],[1330,390,433],[1342,405,438],[1352,393,419],[1364,350,390],[1378,250,335],[1392,177,282],
  [1403,140,253],[1418,116,232],[1437,108,223],[1451,101,213],[1458,103,213],[1477,133,224],[1491,177,245],
  [1499,182,245],[1507,208,258],[1523,229,268],[1539,216,258]
];
const lower = [
  [879,433,493],[893,411,465],[905,403,455],[920,387,427],[930,386,424],[942,400,433],[957,407,460],[970,437,502],
  [993,466,530],[1010,468,529],[1020,459,508],[1033,457,501],[1042,459,503],[1050,468,527],[1063,485,545],
  [1073,497,556],[1080,504,557],[1091,503,555],[1100,512,570],[1107,537,600],[1123,552,620],[1140,557,630]
];

const dashed = [
  "1177,556 1185,554 1208,554 1217,557",
  "1326,556 1338,547 1345,547 1351,555",
  "1466,556 1475,530 1487,490 1503,433 1523,396 1539,397",
  "1477,556 1487,520 1505,450 1523,408 1539,410",
  "1482,556 1497,500 1507,455 1523,420 1539,424",
  "1487,556 1500,513 1507,473 1523,433 1539,438",
  "879,331 890,327 907,325 920,322 940,325 955,329 970,342 987,355 1003,370 1027,380 1043,392 1067,405 1090,422 1103,438 1123,450 1147,453 1170,453 1203,460 1220,466 1240,469 1253,473 1270,470 1290,468 1307,475 1330,492 1350,492 1370,480 1387,460 1410,433 1437,413 1460,392 1477,377 1490,353 1507,338 1539,328"
];

const green = "879,294 898,299 930,308 953,316 980,327 1003,335 1037,346 1060,358 1090,372 1113,384 1137,390 1157,390 1177,391 1210,395 1220,398 1233,400 1250,406 1287,418 1320,433 1347,443 1363,446 1378,446 1395,443 1430,443 1453,440 1483,437 1492,433 1522,428 1539,422";
const gold = "879,313 897,313 907,317 923,319 937,325 957,338 977,362 993,376 1010,385 1033,391 1043,398 1052,408 1075,427 1092,432 1110,450 1123,460 1137,467 1145,471 1163,467 1177,461 1187,460 1217,462 1223,460 1233,458 1243,460 1258,463 1273,474 1283,481 1300,492 1313,495 1330,502 1347,497 1363,484 1387,449 1420,403 1440,380 1450,364 1463,353 1480,342 1497,335 1522,335 1539,328";
const turquoise = "879,353 913,350 933,346 957,343 970,343 1000,346 1013,348 1040,358 1067,374 1093,395 1117,417 1137,428 1153,431 1180,437 1203,445 1220,451 1250,463 1270,471 1290,475 1320,479 1330,482 1343,479 1363,471 1385,459 1420,448 1447,437 1477,419 1493,402 1522,381 1539,368";
const indigo = "879,304 893,320 910,348 930,355 948,357 960,368 970,392 983,407 993,413 1010,411 1030,402 1040,407 1057,430 1070,452 1078,463 1092,465 1103,483 1117,498 1133,504 1140,500 1147,483 1153,452 1173,413 1180,411 1190,422 1203,448 1220,477 1237,488 1250,509 1263,505 1275,505 1290,487 1303,493 1317,497 1330,512 1345,495 1363,452 1375,400 1387,360 1402,327 1412,320 1423,332 1440,353 1453,357 1478,353 1497,322 1513,310 1522,303 1539,305";
const channel = "879,388 891,350 898,269 954,269 963,277 979,278 986,304 994,307 1003,321 1010,330 1042,330 1050,340 1058,358 1074,373 1138,373 1154,381 1267,381 1283,388 1291,402 1299,425 1307,448 1315,449 1323,450 1331,460 1339,543 1443,543 1451,526 1459,474 1467,474 1475,420 1483,418 1491,391 1539,391";
const zigzag = "879,306 1122,546 1154,382 1331,543 1507,266";

const group = add("g", { transform: "translate(-30 -101)" }, plot);

function add(name, attrs, parent) {
  const el = document.createElementNS(NS, name);
  for (const key in attrs) el.setAttribute(key, attrs[key]);
  (parent || group).appendChild(el);
  return el;
}

function line(points, color, width, dash) {
  add("polyline", { points, fill: "none", stroke: color, "stroke-width": width, "stroke-dasharray": dash || "none" });
}

function bands(rows) {
  for (let i = 0; i < 4; i++) {
    const points = rows.map(([x, a, b]) => `${x},${Math.round(a + (b - a) * i / 3)}`).join(" ");
    line(points, "#fff", 1, "3 4");
  }
}

function note(x, y, text, color) {
  add("text", { x, y, fill: color, "font-size": 13 }).textContent = text;
}

line("30,284 4000,284", "#778899", 1);
bands(upper);
bands(lower);
dashed.forEach(points => line(points, "#fff", 1, "3 4"));
line(indigo, "#4b0082", 2);

candles.forEach(([high, top, bottom, low], i) => {
  const x = 883 + i * 8;
  const color = i < 2 || i > 56 ? "#ff0000" : "#00ff00";
  add("rect", { x: x - 1, y: high, width: 1, height: low - high, fill: color });
  add("rect", { x: x - 3, y: top, width: 5, height: bottom - top, fill: color });
});

line(green, "#32cd32", 2);
line(turquoise, "#40e0d0", 2);
line(gold, "#ffd700", 2);
line(channel, "#ffff00", 1);
line(zigzag, "#ff0000", 1);

note(885, 350, "开空", "#ffff00");
note(1045, 489, "空减", "#ff69b4");
note(1397, 328, "多减", "#90ee90");
note(1325, 525, "开多", "#ff00ff");
add("path", { d: "M1550 101H1559L1554.500 106Z", fill: "#778899" });
```
